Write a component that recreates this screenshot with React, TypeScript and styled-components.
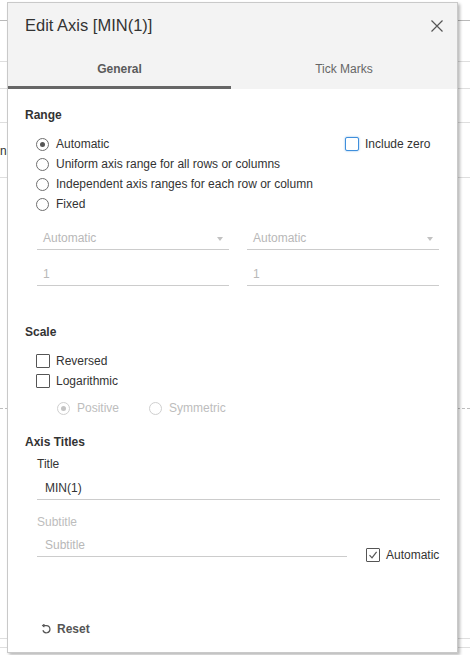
import React from "react";
import styled, { createGlobalStyle } from "styled-components";

const GlobalStyle = createGlobalStyle`
  html, body {
    margin: 0;
    padding: 0;
    background: #ffffff;
    font-family: "Liberation Sans", Arial, sans-serif;
  }
  * {
    box-sizing: border-box;
  }
`;

const Page = styled.div`
  position: relative;
  width: 470px;
  height: 655px;
  overflow: hidden;
  background: #ffffff;
`;

/* sheet behind the dialog: only thin slivers of it show */
const Sheet = styled.div`
  display: flex;
  flex-direction: column;
`;

const SheetRow = styled.div<{ $h: number; $line?: string; $dashed?: boolean }>`
  height: ${(p) => p.$h}px;
  border-bottom: 1px ${(p) => (p.$dashed ? "dashed" : "solid")}
    ${(p) => p.$line || "#dedede"};
  display: flex;
  align-items: center;
  font-size: 12px;
  color: #333;
  overflow: hidden;
`;

const SheetText = styled.span`
  margin-top: 1px;
`;

const Dialog = styled.div`
  position: absolute;
  left: 7px;
  top: 2px;
  width: 451px;
  height: 651px;
  background: #ffffff;
  border: 1px solid #c9c9c9;
  box-shadow: 2px 2px 3px rgba(0, 0, 0, 0.28);
  display: flex;
  flex-direction: column;
`;

const Header = styled.div`
  background: #f3f3f3;
`;

const TitleBar = styled.div`
  height: 45px;
  padding: 0 13px 0 17px;
  display: flex;
  align-items: center;
  justify-content: space-between;
`;

const Title = styled.h1`
  margin: 0;
  font-size: 16.5px;
  font-weight: 400;
  color: #333333;
`;

const CloseButton = styled.button`
  width: 14px;
  height: 14px;
  padding: 0;
  border: none;
  background: none;
  display: flex;
  align-items: center;
  justify-content: center;
  cursor: pointer;
`;

const Tabs = styled.div`
  display: grid;
  grid-template-columns: 223px 1fr;
`;

const Tab = styled.div<{ $active?: boolean }>`
  height: 41px;
  padding-top: 4px;
  border-bottom: 3px solid ${(p) => (p.$active ? "#666666" : "transparent")};
  display: flex;
  align-items: center;
  justify-content: center;
  font-size: 12px;
  font-weight: ${(p) => (p.$active ? 700 : 400)};
  color: ${(p) => (p.$active ? "#5a5a5a" : "#666666")};
`;

const Body = styled.div`
  flex: 1;
  display: flex;
  flex-direction: column;
  padding: 0 17px;
`;

const SectionTitle = styled.div<{ $mt: number }>`
  margin-top: ${(p) => p.$mt}px;
  line-height: 16px;
  font-size: 12px;
  font-weight: 700;
  color: #333333;
`;

const RangeRow = styled.div`
  display: flex;
  margin-top: 11px;
`;

const OptionList = styled.div`
  flex: 0 0 320px;
  display: flex;
  flex-direction: column;
`;

const Option = styled.label<{ $indent?: number; $disabled?: boolean }>`
  height: 20px;
  padding-left: ${(p) => p.$indent ?? 11}px;
  display: flex;
  align-items: center;
  gap: 7px;
  font-size: 12px;
  color: ${(p) => (p.$disabled ? "#bdbdbd" : "#333333")};
`;

const Radio = styled.span<{ $checked?: boolean; $disabled?: boolean }>`
  position: relative;
  width: 13px;
  height: 13px;
  flex: 0 0 13px;
  border-radius: 50%;
  border: 1px solid ${(p) => (p.$disabled ? "#cfcfcf" : "#6e6e6e")};
  background: #fff;
  &::after {
    content: "";
    display: ${(p) => (p.$checked ? "block" : "none")};
    position: absolute;
    left: 3px;
    top: 3px;
    width: 5px;
    height: 5px;
    border-radius: 50%;
    background: ${(p) => (p.$disabled ? "#c4c4c4" : "#555555")};
  }
`;

const Check = styled.span<{ $focus?: boolean }>`
  width: 14px;
  height: 14px;
  flex: 0 0 14px;
  border-radius: ${(p) => (p.$focus ? "2px" : "1px")};
  border: ${(p) => (p.$focus ? "1.5px solid #3f8fdc" : "1px solid #555555")};
  box-shadow: ${(p) => (p.$focus ? "0 0 2px rgba(63, 143, 220, 0.7)" : "none")};
  background: #fff;
  display: flex;
  align-items: center;
  justify-content: center;
`;

const CheckOption = styled.label`
  height: 20px;
  display: flex;
  align-items: center;
  gap: 6px;
  font-size: 12px;
  color: #333333;
`;

const ScaleOptions = styled.div`
  margin-top: 11px;
  display: flex;
  flex-direction: column;
`;

const ScaleOption = styled(CheckOption)`
  padding-left: 11px;
`;

const SubOptions = styled.div`
  margin-top: 7px;
  display: flex;
  gap: 30px;
`;

const FieldGrid = styled.div`
  margin: 12px 0 0 12px;
  display: grid;
  grid-template-columns: 192px 192px;
  column-gap: 18px;
  row-gap: 12px;
`;

const Field = styled.div<{ $muted?: boolean; $width?: number }>`
  height: 24px;
  width: ${(p) => (p.$width ? `${p.$width}px` : "auto")};
  padding: 1px 6px 0 6px;
  border-bottom: 1px solid #cccccc;
  display: flex;
  align-items: center;
  justify-content: space-between;
  font-size: 12px;
  color: ${(p) => (p.$muted ? "#b8b8b8" : "#333333")};
`;

const TextField = styled(Field)<{ $mt?: number }>`
  padding-left: 8px;
  margin: ${(p) => p.$mt ?? 0}px 0 0 12px;
`;

const Caret = styled.span`
  width: 0;
  height: 0;
  margin-top: 2px;
  border-left: 3.5px solid transparent;
  border-right: 3.5px solid transparent;
  border-top: 4px solid #c2c2c2;
`;

const FieldLabel = styled.div<{ $mt: number; $muted?: boolean }>`
  margin: ${(p) => p.$mt}px 0 0 12px;
  line-height: 16px;
  font-size: 12px;
  color: ${(p) => (p.$muted ? "#bdbdbd" : "#333333")};
`;

const SubtitleRow = styled.div`
  margin-top: 3px;
  display: flex;
  align-items: flex-start;
`;

const AutoOption = styled(CheckOption)`
  height: 14px;
  margin: 15px 0 0 19px;
`;

const Footer = styled.div`
  margin-top: auto;
  padding: 0 0 13px 16px;
`;

const ResetButton = styled.button`
  height: 20px;
  padding: 0;
  border: none;
  background: none;
  display: flex;
  align-items: center;
  gap: 6px;
  font-family: inherit;
  font-size: 12px;
  font-weight: 700;
  color: #555555;
  cursor: pointer;
`;

const App: React.FC = () => {
  return (
    <Page>
      <GlobalStyle />
      <Sheet>
        <SheetRow $h={21} $line="#b9b9b9" />
        <SheetRow $h={41} />
        <SheetRow $h={27} />
        <SheetRow $h={34} />
        <SheetRow $h={55}>
          <SheetText>na</SheetText>
        </SheetRow>
        <SheetRow $h={231} $line="#bdbdbd" $dashed />
        <SheetRow $h={230} />
        <SheetRow $h={9} />
      </Sheet>

      <Dialog>
        <Header>
          <TitleBar>
            <Title>Edit Axis [MIN(1)]</Title>
            <CloseButton aria-label="Close">
              <svg width="12" height="12" viewBox="0 0 12 12">
                <path d="M0.5 0.5 L11.5 11.5 M11.5 0.5 L0.5 11.5" stroke="#555" strokeWidth="1.2" fill="none" />
              </svg>
            </CloseButton>
          </TitleBar>
          <Tabs>
            <Tab $active>General</Tab>
            <Tab>Tick Marks</Tab>
          </Tabs>
        </Header>

        <Body>
          <SectionTitle $mt={18}>Range</SectionTitle>
          <RangeRow>
            <OptionList>
              <Option>
                <Radio $checked />
                Automatic
              </Option>
              <Option>
                <Radio />
                Uniform axis range for all rows or columns
              </Option>
              <Option>
                <Radio />
                Independent axis ranges for each row or column
              </Option>
              <Option>
                <Radio />
                Fixed
              </Option>
            </OptionList>
            <CheckOption>
              <Check $focus />
              Include zero
            </CheckOption>
          </RangeRow>

          <FieldGrid>
            <Field $muted>
              Automatic
              <Caret />
            </Field>
            <Field $muted>
              Automatic
              <Caret />
            </Field>
            <Field $muted>1</Field>
            <Field $muted>1</Field>
          </FieldGrid>

          <SectionTitle $mt={38}>Scale</SectionTitle>
          <ScaleOptions>
            <ScaleOption>
              <Check />
              Reversed
            </ScaleOption>
            <ScaleOption>
              <Check />
              Logarithmic
            </ScaleOption>
            <SubOptions>
              <Option $indent={32} $disabled>
                <Radio $checked $disabled />
                Positive
              </Option>
              <Option $indent={0} $disabled>
                <Radio $disabled />
                Symmetric
              </Option>
            </SubOptions>
          </ScaleOptions>

          <SectionTitle $mt={16}>Axis Titles</SectionTitle>
          <FieldLabel $mt={6}>Title</FieldLabel>
          <TextField $mt={4}>MIN(1)</TextField>
          <FieldLabel $mt={14} $muted>
            Subtitle
          </FieldLabel>
          <SubtitleRow>
            <TextField $muted $width={310}>
              Subtitle
            </TextField>
            <AutoOption>
              <Check>
                <svg width="10" height="10" viewBox="0 0 10 10">
                  <path d="M1.5 5.2 L4 7.8 L8.6 1.8" stroke="#555" strokeWidth="1.2" fill="none" />
                </svg>
              </Check>
              Automatic
            </AutoOption>
          </SubtitleRow>

          <Footer>
            <ResetButton>
              <svg width="10" height="10" viewBox="0 0 10 10">
                <path d="M2.2 1.6 H5.4 A3.6 3.6 0 1 1 1.9 6.3" stroke="#555" strokeWidth="1.2" fill="none" />
                <path d="M3.4 0.2 L1.6 1.6 L3.4 3" stroke="#555" strokeWidth="1.1" fill="none" />
              </svg>
              Reset
            </ResetButton>
          </Footer>
        </Body>
      </Dialog>
    </Page>
  );
};

export default App;
